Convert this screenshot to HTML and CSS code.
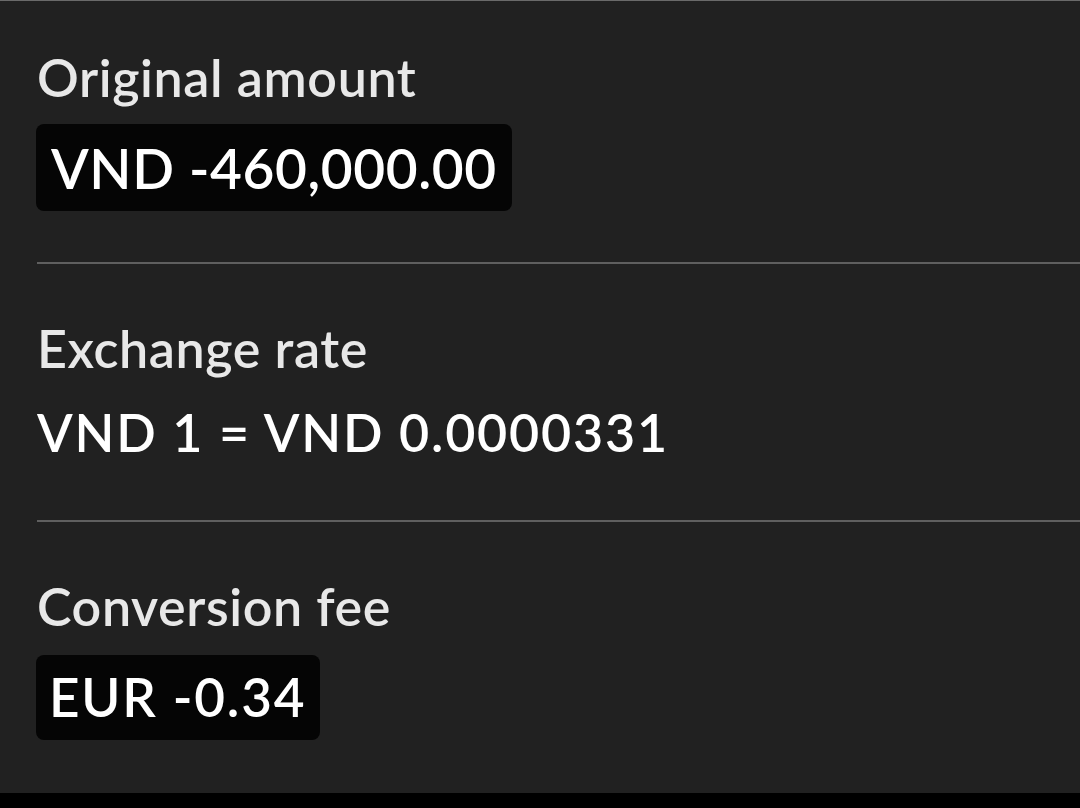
FILE: index.html
```html
<!DOCTYPE html>
<html lang="en">
<head>
<meta charset="utf-8">
<title>Conversion details</title>
<link rel="stylesheet" href="styles.css">
</head>
<body>
<main class="screen">
  <section class="item item-first">
    <div class="label">Original amount</div>
    <div class="value boxed value-large">VND -460,000.00</div>
  </section>
  <div class="divider"></div>
  <section class="item">
    <div class="label">Exchange rate</div>
    <div class="value value-rate">VND 1 = VND 0.0000331</div>
  </section>
  <div class="divider divider-second"></div>
  <section class="item">
    <div class="label">Conversion fee</div>
    <div class="value boxed value-fee">EUR -0.34</div>
  </section>
</main>
<div class="bottom-bar"></div>
</body>
</html>
```

FILE: styles.css
```css
html, body {
  margin: 0;
  padding: 0;
}

body {
  background: #212121;
  font-family: Lato, "Open Sans", sans-serif;
  color: #ffffff;
  width: 1080px;
  height: 808px;
  overflow: hidden;
  display: flex;
  flex-direction: column;
}

.screen {
  flex: 1;
  border-top: 1px solid #6a6a6a;
  padding-left: 37px;
  display: flex;
  flex-direction: column;
}

.item {
  display: flex;
  flex-direction: column;
  align-items: flex-start;
  padding-top: 54px;
}

.item-first {
  padding-top: 46px;
}

.label {
  font-size: 52px;
  line-height: 60px;
  color: #e8e8e8;
  font-weight: 600;
  letter-spacing: 0.6px;
}

.value {
  line-height: 1.2;
  color: #ffffff;
  font-weight: 600;
}

.boxed {
  background: #050505;
  border-radius: 8px;
  margin-left: -1px;
}

.value-large {
  font-size: 55px;
  margin-top: 17px;
  padding: 11px 15px 10px 15px;
  letter-spacing: 0.6px;
}

.value-rate {
  font-size: 52px;
  margin-top: 23px;
  letter-spacing: 1.8px;
}

.value-fee {
  font-size: 53px;
  margin-top: 19px;
  padding: 10px 14px 11px 13px;
  letter-spacing: 1.8px;
}

.divider {
  height: 2px;
  background: #5f5f5f;
  margin-top: 51px;
}

.divider-second {
  margin-top: 57px;
}

.bottom-bar {
  height: 15px;
  background: #000000;
}
```
